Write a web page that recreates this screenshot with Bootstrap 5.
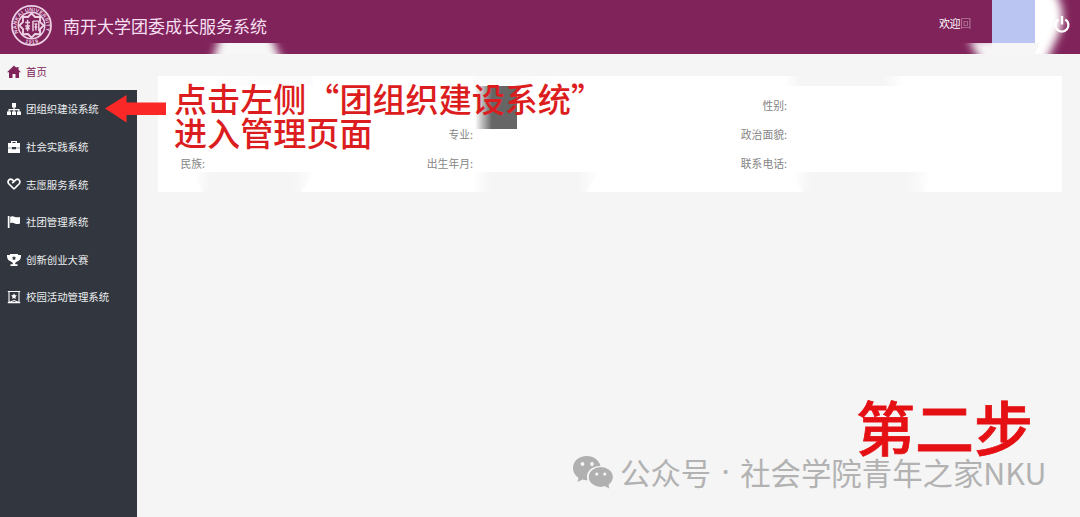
<!DOCTYPE html>
<html lang="zh-CN">
<head>
<meta charset="utf-8">
<meta name="viewport" content="width=device-width, initial-scale=1">
<title>南开大学团委成长服务系统</title>
<link href="https://cdn.jsdelivr.net/npm/bootstrap@5.3.0/dist/css/bootstrap.min.css" rel="stylesheet">
<style>
body{font-family:"Noto Sans CJK SC",sans-serif;background:#f5f5f5;height:517px;overflow:hidden;font-size:10.4px;line-height:1.5}
.topbar{height:54px;background:#80235a;color:#f6dff0;padding-left:11px}
.brand-title{font-size:17px;margin-left:11px;line-height:24px;margin-top:-3px;white-space:nowrap}
.welcome{left:939px;top:15px;font-size:11px;letter-spacing:-.4px;color:#fff}
.welcome i{font-style:normal;opacity:.4}
.side{width:137px;background:#32363e}
.side a{height:37.6px;padding-left:7px;color:#eceef0;text-decoration:none;white-space:nowrap}
.side a svg{width:14px;height:14px;margin-right:5px;flex:none}
.side a.home{height:36.4px;background:#f5f5f5;color:#80235a;width:138px}
.info{margin:22px 18px 0 21px;height:116px;background:#fff;padding-top:14.5px;color:#858585;font-size:10.8px}
.info .line{height:29px;display:grid;grid-template-columns:47px 268px 314px;text-align:right;align-items:center}
.red{color:#dc1d20;font-weight:500;white-space:nowrap}
.tip{left:174px;top:82px;font-size:33.1px;line-height:33.5px}
.step{left:856px;top:396px;font-size:59px;line-height:60px;color:#e51014;font-weight:500;-webkit-text-stroke:.8px #e51014}
.mark-line{left:571px;top:452px;height:40px;font-size:30.4px;line-height:40px;color:#b2b2b2;white-space:nowrap}
.dot{width:29px;text-align:center;font-family:"Noto Sans",sans-serif}
</style>
</head>
<body class="d-flex flex-column position-relative">
<header class="topbar d-flex align-items-center position-relative flex-shrink-0">
  <svg width="41" height="41" viewBox="0 0 42 42" fill="none" stroke="#ecd0e4" style="margin-top:-3px">
    <circle cx="21" cy="21" r="20" stroke-width="1.8"/>
    <circle cx="21" cy="21" r="13.6" stroke-width="1.5"/>
    <defs><path id="ring" d="M7.4 28.5A15.2 15.2 0 1 1 34.6 28.5"/><path id="ringlow" d="M10 36.2A18.6 18.6 0 0 0 32 36.2"/></defs>
    <g fill="#ecd0e4" stroke="none" font-family="Liberation Sans" font-weight="700" font-size="5.4">
      <text><textPath href="#ring" textLength="59">NANKAI UNIVERSITY</textPath></text>
      <text><textPath href="#ringlow" startOffset="5" textLength="14">1919</textPath></text>
    </g>
    <path d="M21 8.5l3.6 3.7 5.2-.1-.1 5.2 3.8 3.7-3.8 3.7.1 5.2-5.2-.1L21 33.500l-3.600-3.700-5.200.1.1-5.200L8.500 21l3.800-3.700-.1-5.200 5.200.1z" stroke-width="2"/>
    <path d="M14.500 18h5M17 15v12M14.500 21.500h5M15 25l2-3 2 3M22.500 16.500h6M22.500 16.500V27M28.500 16.500V27M24 19.500h3M24 22.500h3M25.500 19v7" stroke-width="1.5"/>
  </svg>
  <div class="brand-title">南开大学团委成长服务系统</div>
  <div class="welcome position-absolute">欢迎<i>回</i></div>
  <svg class="position-absolute top-0 start-0" width="1080" height="54">
    <defs>
      <filter id="soft" x="-30%" y="-30%" width="160%" height="160%"><feGaussianBlur stdDeviation="4"/></filter>
      <clipPath id="low"><path d="M190 43h120v11H190zM950 43h42v11h-42zM992 0h88v54h-88z"/></clipPath>
    </defs>
    <g clip-path="url(#low)">
      <path d="M221 34h49l17 40h-79z" fill="#f7f7f7" filter="url(#soft)"/>
      <path d="M968 39h30v26h-15z" fill="#f7f5f7" filter="url(#soft)"/>
      <path d="M992 -12h60Q1069 10 1059 34L1044 66H992z" fill="#fff" filter="url(#soft)"/>
      <path d="M992 43h48l-5 11h-43z" fill="#f6f6f6"/>
      <path d="M992 0h43v43h-43z" fill="#bac5f2"/>
    </g>
    <g fill="none" stroke="#fff" stroke-width="2.300"><path d="M1058.500 19.500A6.500 6.500 0 1 0 1065.300 19.500M1062 16v8.500"/></g>
  </svg>
</header>
<div class="d-flex flex-grow-1">
  <nav class="side d-flex flex-column flex-shrink-0">
    <a href="#" class="home d-flex align-items-center"><svg viewBox="0 0 14 14" fill="#80235a"><path d="M7 .5L0 7.300h2V13h3.500V9h3v4H12V7.300h2L11.500 4.800V2h-2v1z"/></svg>首页</a>
    <a href="#" class="d-flex align-items-center"><svg viewBox="0 0 14 14" fill="#fff"><path d="M5 1h4v4.500H7.600V7H12.500v2.500H14v3.500h-4V9.500h1.300V8.200H7.600v1.300H9v3.500H5V9.500h1.400V8.200H2.700v1.300H4v3.500H0V9.500h1.500V7h4.900V5.500H5z"/></svg>团组织建设系统</a>
    <a href="#" class="d-flex align-items-center"><svg viewBox="0 0 14 14" fill="#fff"><path d="M4 3V1h6v2h3v4.700H9V7H5v.7H1V3zm1.400 0h3.200v-.9H5.400zM1 8.300h4v1h4v-1h4V13H1z"/></svg>社会实践系统</a>
    <a href="#" class="d-flex align-items-center"><svg viewBox="0 0 14 14" fill="none" stroke="#fff" stroke-width="1.700"><path d="M7 12L2 7C-.5 4.200 2.800.8 5.500 3L7 4.500M5.200 6.200L8.800 2.800C11.500 1 14.200 4.300 12 7L7 12"/></svg>志愿服务系统</a>
    <a href="#" class="d-flex align-items-center"><svg viewBox="0 0 14 14" fill="#fff"><path d="M.8 1h1.700v12H.8zM3.200 1.700C5 .7 6.500 1.200 8 1.900s3 .5 5 0v6.600c-2 .8-3.500.8-5.200 0S5 7.500 3.200 8.300z"/></svg>社团管理系统</a>
    <a href="#" class="d-flex align-items-center"><svg viewBox="0 0 14 14" fill="#fff"><path fill-rule="evenodd" d="M3 1h8v1h3C14.200 5.500 12.800 7.800 10 8.600L8.200 10v1.300h2.300V13h-7v-1.700h2.300V10L4 8.600C1.200 7.800-.2 5.500 0 2h3zM7 2.900L6.300 4.200l-1.500.3L5.900 5.600l-.2 1.500L7 6.400l1.300.7-.2-1.500 1.100-1.100L7.700 4.200z"/></svg>创新创业大赛</a>
    <a href="#" class="d-flex align-items-center"><svg viewBox="0 0 14 14"><path d="M2 1.500h10V12.500L7 10.500 2 12.500zM.8 1.500h12.400M.8 12.600h12.400" fill="none" stroke="#fff" stroke-width="1.100"/><path d="M7 3.200l.9 1.900 2 .3-1.500 1.500.4 2.100L7 8l-1.800 1 .4-2.100L4.100 5.400l2-.3z" fill="#fff"/></svg>校园活动管理系统</a>
  </nav>
  <main class="flex-grow-1">
    <section class="info position-relative">
      <div class="line"><span></span><span></span><span>性别:</span></div>
      <div class="line"><span></span><span>专业:</span><span>政治面貌:</span></div>
      <div class="line"><span>民族:</span><span>出生年月:</span><span>联系电话:</span></div>
      <svg class="position-absolute top-0 start-0" width="904" height="116">
        <defs>
          <linearGradient id="edge"><stop stop-color="#f5f5f5" stop-opacity="0"/><stop offset=".14" stop-color="#f5f5f5"/><stop offset=".82" stop-color="#f5f5f5"/><stop offset="1" stop-color="#f5f5f5" stop-opacity="0"/></linearGradient>
          <linearGradient id="dark"><stop stop-color="#666" stop-opacity="0"/><stop offset=".4" stop-color="#666"/></linearGradient>
        </defs>
        <g fill="url(#edge)">
          <path d="M35 96h122l-14 20H44z"/>
          <path d="M315 96h127l-14 20H317z"/>
          <path d="M634 96h140l-8 20H644z"/>
          <path d="M626 0h120v10H626z"/>
          <path d="M45 0h110v9H45zM315 0h110v9H315z" opacity=".35"/>
        </g>
        <path d="M317 10h42v43h-42z" fill="url(#dark)"/>
      </svg>
    </section>
  </main>
</div>
<svg class="position-absolute" style="left:104px;top:94px" width="64" height="30"><path d="M1 14.500L22.500 1v7.500H62v12.500H22.500v7.500z" fill="#fb2828"/></svg>
<div class="tip red position-absolute">点击左侧“团组织建设系统”<br>进入管理页面</div>
<div class="step red position-absolute">第二步</div>
<div class="mark-line position-absolute d-flex">
  <svg width="43" height="34" viewBox="0 0 43 34" fill="#b0b0b0" class="flex-shrink-0" style="margin:4px 5px 0 1px"><path d="M15 0C6.500 0 1 5.500 1 12c0 4.200 2 7.500 5.500 9.800L5.500 26l5-2.500c1.500.5 3 .8 5 .7C13 17 19 9.800 28.500 10 27 4 21.500 0 15 0z"/><ellipse cx="28.800" cy="21" rx="12" ry="10"/><path d="M32 29.500l5 3-.5-6z"/><g fill="#f5f5f5"><circle cx="10.500" cy="8" r="1.900"/><circle cx="20" cy="8" r="1.900"/><circle cx="24.800" cy="18" r="1.600"/><circle cx="32.800" cy="18" r="1.600"/></g></svg>
  <span>公众号</span><span class="dot">·</span><span>社会学院青年之家NKU</span>
</div>
<script src="https://cdn.jsdelivr.net/npm/bootstrap@5.3.0/dist/js/bootstrap.bundle.min.js"></script>
</body>
</html>
